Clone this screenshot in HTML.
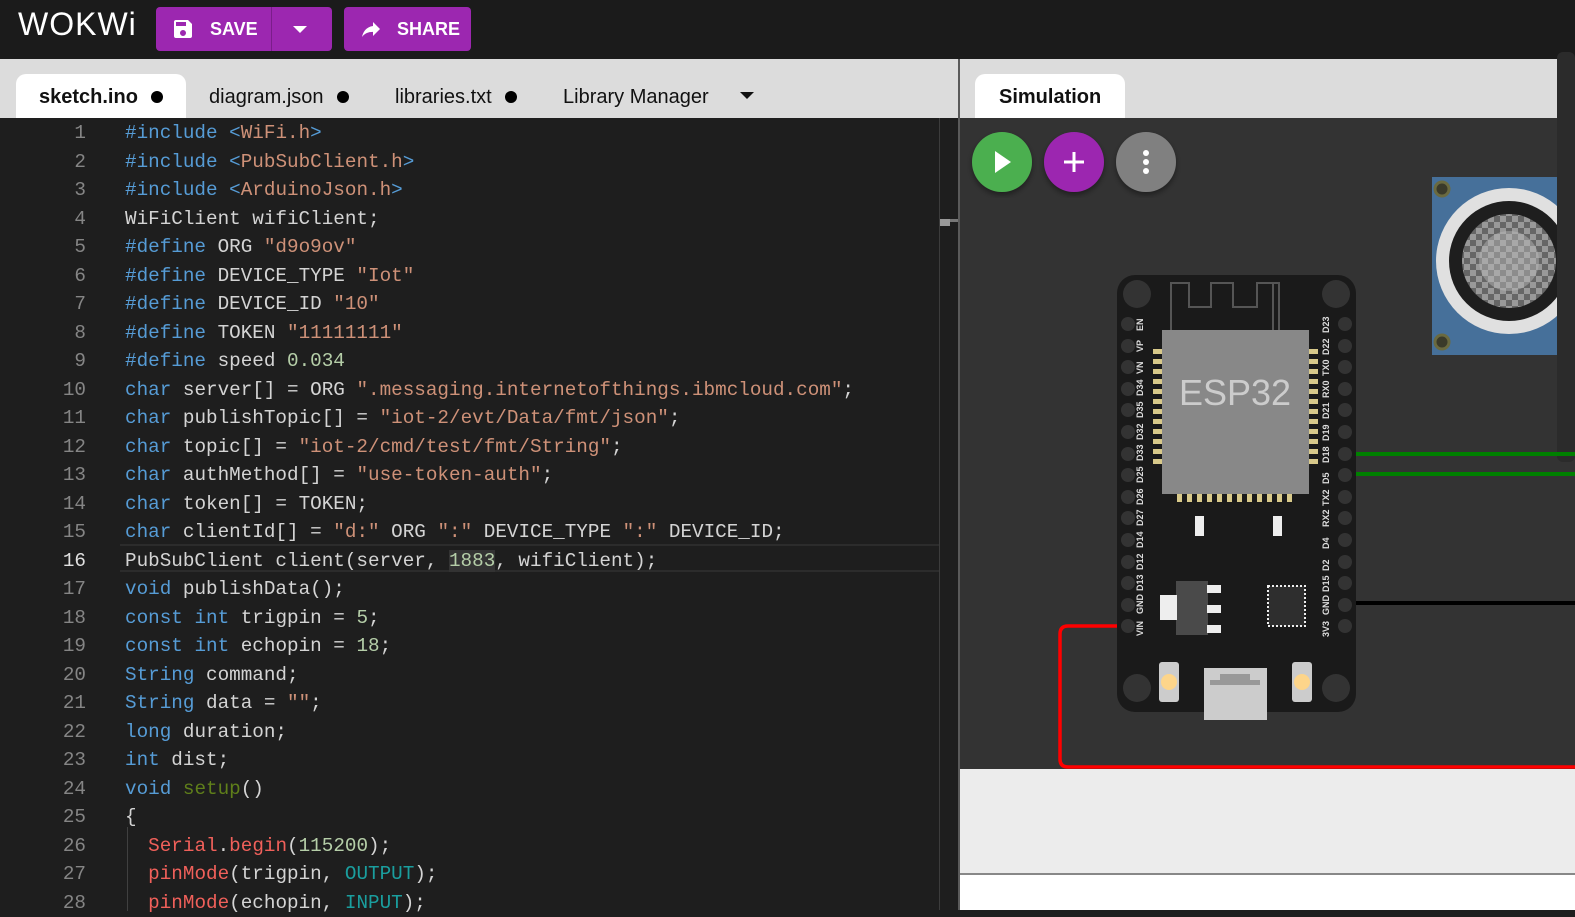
<!DOCTYPE html>
<html><head><meta charset="utf-8"><style>
*{margin:0;padding:0;box-sizing:border-box}
body{width:1575px;height:910px;overflow:hidden;background:#1e1e1e;position:relative;font-family:"Liberation Sans",sans-serif}
.top{position:absolute;left:0;top:0;width:1575px;height:59px;background:#1b1b1b}
.btn{position:absolute;top:7px;height:44px;background:#9c27b0;border-radius:4px;color:#fff;font-weight:bold;font-size:18px;line-height:44px}
.tabbar{position:absolute;top:59px;height:59px;background:#dcdcdc}
.tab{position:absolute;top:15px;height:44px;font-size:20px;line-height:46px;color:#111}
.code{position:absolute;left:0;top:119px;width:940px;font-family:"Liberation Mono",monospace;font-size:19.3px;color:#d4d4d4}
.l{height:28.52px;line-height:28.52px;white-space:pre;position:relative}
.n{display:inline-block;width:86px;text-align:right;color:#858585;margin-right:39px}
.k{color:#569cd6}.s{color:#ce9178}.d{color:#b5cea8}.f{color:#5f7f1a}.r{color:#f0605a}.t{color:#1a9e9e}
</style></head><body>
<div class="top">
  <div style="position:absolute;left:18px;top:6px;color:#fff;font-size:32px;letter-spacing:1px;font-family:'Liberation Sans',sans-serif">WOKWi</div>
  <div class="btn" style="left:156px;width:176px">
    <svg style="position:absolute;left:15px;top:10px" width="24" height="24" viewBox="0 0 24 24"><path fill="#fff" d="M17 3H5a2 2 0 0 0-2 2v14a2 2 0 0 0 2 2h14a2 2 0 0 0 2-2V7l-4-4zm-5 16a3 3 0 1 1 0-6 3 3 0 0 1 0 6zm3-10H5V5h10v4z"/></svg>
    <span style="position:absolute;left:54px">SAVE</span>
    <div style="position:absolute;left:115px;top:0;width:1px;height:44px;background:#7a1d8a"></div>
    <div style="position:absolute;left:137px;top:19px;border-left:7px solid transparent;border-right:7px solid transparent;border-top:7px solid #fff"></div>
  </div>
  <div class="btn" style="left:344px;width:127px">
    <svg style="position:absolute;left:14px;top:10px" width="26" height="24" viewBox="0 0 24 24"><path fill="#fff" d="M14 5v4C7 10 4 15 3 20c2.5-3.5 6-5.1 11-5.1V19l7-7-7-7z"/></svg>
    <span style="position:absolute;left:53px">SHARE</span>
  </div>
</div>
<div class="tabbar" style="left:0;width:958px">
  <div class="tab" style="left:16px;width:170px;background:#fff;border-radius:10px 10px 0 0;font-weight:bold;padding-left:23px">sketch.ino <span style="display:inline-block;width:12px;height:12px;border-radius:50%;background:#000;margin-left:8px"></span></div>
  <div class="tab" style="left:209px">diagram.json <span style="display:inline-block;width:12px;height:12px;border-radius:50%;background:#000;margin-left:8px"></span></div>
  <div class="tab" style="left:395px">libraries.txt <span style="display:inline-block;width:12px;height:12px;border-radius:50%;background:#000;margin-left:8px"></span></div>
  <div class="tab" style="left:563px">Library Manager</div>
  <div style="position:absolute;left:740px;top:33px;border-left:7px solid transparent;border-right:7px solid transparent;border-top:7px solid #111"></div>
</div>
<div class="tabbar" style="left:960px;width:615px">
  <div class="tab" style="left:15px;width:150px;background:#fff;border-radius:10px 10px 0 0;font-weight:bold;padding-left:24px">Simulation</div>
</div>
<div style="position:absolute;left:958px;top:59px;width:2px;height:851px;background:#5a5a5a"></div>
<div style="position:absolute;left:939px;top:118px;width:1px;height:792px;background:#3c3c3c"></div>
<div style="position:absolute;left:940px;top:219px;width:18px;height:3px;background:#777"></div>
<div style="position:absolute;left:940px;top:219px;width:10px;height:7px;background:#999"></div>
<div style="position:absolute;left:120px;top:544px;width:819px;height:28px;border-top:2px solid #2c2c2c;border-bottom:2px solid #2c2c2c"></div>
<div style="position:absolute;left:127px;top:827px;width:1px;height:84px;background:#404040"></div>
<div class="code">
<div class="l"><span class="n">1</span><span class="k">#include</span> <span class="k">&lt;</span><span class="s">WiFi.h</span><span class="k">&gt;</span></div>
<div class="l"><span class="n">2</span><span class="k">#include</span> <span class="k">&lt;</span><span class="s">PubSubClient.h</span><span class="k">&gt;</span></div>
<div class="l"><span class="n">3</span><span class="k">#include</span> <span class="k">&lt;</span><span class="s">ArduinoJson.h</span><span class="k">&gt;</span></div>
<div class="l"><span class="n">4</span>WiFiClient wifiClient;</div>
<div class="l"><span class="n">5</span><span class="k">#define</span> ORG <span class="s">"d9o9ov"</span></div>
<div class="l"><span class="n">6</span><span class="k">#define</span> DEVICE_TYPE <span class="s">"Iot"</span></div>
<div class="l"><span class="n">7</span><span class="k">#define</span> DEVICE_ID <span class="s">"10"</span></div>
<div class="l"><span class="n">8</span><span class="k">#define</span> TOKEN <span class="s">"11111111"</span></div>
<div class="l"><span class="n">9</span><span class="k">#define</span> speed <span class="d">0.034</span></div>
<div class="l"><span class="n">10</span><span class="k">char</span> server[] = ORG <span class="s">".messaging.internetofthings.ibmcloud.com"</span>;</div>
<div class="l"><span class="n">11</span><span class="k">char</span> publishTopic[] = <span class="s">"iot-2/evt/Data/fmt/json"</span>;</div>
<div class="l"><span class="n">12</span><span class="k">char</span> topic[] = <span class="s">"iot-2/cmd/test/fmt/String"</span>;</div>
<div class="l"><span class="n">13</span><span class="k">char</span> authMethod[] = <span class="s">"use-token-auth"</span>;</div>
<div class="l"><span class="n">14</span><span class="k">char</span> token[] = TOKEN;</div>
<div class="l"><span class="n">15</span><span class="k">char</span> clientId[] = <span class="s">"d:"</span> ORG <span class="s">":"</span> DEVICE_TYPE <span class="s">":"</span> DEVICE_ID;</div>
<div class="l"><span class="n" style="color:#e0e0e0">16</span>PubSubClient client(server, <span class="d" style="background:#333">1883</span>, wifiClient);</div>
<div class="l"><span class="n">17</span><span class="k">void</span> publishData();</div>
<div class="l"><span class="n">18</span><span class="k">const</span> <span class="k">int</span> trigpin = <span class="d">5</span>;</div>
<div class="l"><span class="n">19</span><span class="k">const</span> <span class="k">int</span> echopin = <span class="d">18</span>;</div>
<div class="l"><span class="n">20</span><span class="k">String</span> command;</div>
<div class="l"><span class="n">21</span><span class="k">String</span> data = <span class="s">""</span>;</div>
<div class="l"><span class="n">22</span><span class="k">long</span> duration;</div>
<div class="l"><span class="n">23</span><span class="k">int</span> dist;</div>
<div class="l"><span class="n">24</span><span class="k">void</span> <span class="f">setup</span>()</div>
<div class="l"><span class="n">25</span>{</div>
<div class="l"><span class="n">26</span>  <span class="r">Serial</span>.<span class="r">begin</span>(<span class="d">115200</span>);</div>
<div class="l"><span class="n">27</span>  <span class="r">pinMode</span>(trigpin, <span class="t">OUTPUT</span>);</div>
<div class="l"><span class="n">28</span>  <span class="r">pinMode</span>(echopin, <span class="t">INPUT</span>);</div>
</div>
<div style="position:absolute;left:960px;top:118px;width:615px;height:651px;background:#333"></div>
<div style="position:absolute;left:960px;top:769px;width:615px;height:105px;background:#ececec"></div>
<div style="position:absolute;left:960px;top:873px;width:615px;height:2px;background:#888"></div>
<div style="position:absolute;left:960px;top:875px;width:615px;height:35px;background:#fff"></div>
<svg style="position:absolute;left:0;top:0" width="1575" height="910" viewBox="0 0 1575 910">
  <defs>
    <pattern id="chk" width="12" height="12" patternUnits="userSpaceOnUse"><rect width="12" height="12" fill="#666"/><rect width="6" height="6" fill="#999"/><rect x="6" y="6" width="6" height="6" fill="#999"/></pattern>
    <filter id="sh"><feDropShadow dx="0" dy="3" stdDeviation="3" flood-opacity="0.4"/></filter>
  </defs>
  <g filter="url(#sh)">
  <circle cx="1002" cy="162" r="30" fill="#4caf50"/>
  <circle cx="1074" cy="162" r="30" fill="#9c27b0"/>
  <circle cx="1146" cy="162" r="30" fill="#808080"/>
  </g>
  <path d="M995 151v22l16-11z" fill="#fff"/>
  <path d="M1074 152v20M1064 162h20" stroke="#fff" stroke-width="3"/>
  <circle cx="1146" cy="153" r="3" fill="#fff"/><circle cx="1146" cy="162" r="3" fill="#fff"/><circle cx="1146" cy="171" r="3" fill="#fff"/>
  <rect x="1432" y="177" width="130" height="178" fill="#46709a"/>
  <circle cx="1442" cy="189" r="7" fill="#3a3a2a" stroke="#6a6a40" stroke-width="3"/>
  <circle cx="1442" cy="342" r="7" fill="#3a3a2a" stroke="#6a6a40" stroke-width="3"/>
  <circle cx="1509" cy="261" r="73" fill="#e0e0e0"/>
  <circle cx="1509" cy="261" r="60" fill="#1e1e1e"/>
  <circle cx="1509" cy="261" r="47" fill="url(#chk)"/>
  <circle cx="1509" cy="261" r="30" fill="#bbb" opacity="0.45"/>
  <rect x="1557" y="52" width="18" height="410" rx="6" fill="#2b2b2b"/>
  <path d="M1345 454H1575M1345 474H1575" stroke="#008000" stroke-width="4"/>
  <path d="M1345 603H1575" stroke="#000" stroke-width="4"/>
  <path d="M1128 626H1068q-8 0-8 8V759q0 8 8 8H1575" stroke="#f00" stroke-width="3.5" fill="none"/>
  <rect x="1117" y="275" width="239" height="437" rx="18" fill="#1a1a1a"/>
  <circle cx="1137" cy="294" r="14" fill="#333"/><circle cx="1336" cy="294" r="14" fill="#333"/>
  <circle cx="1137" cy="688" r="14" fill="#333"/><circle cx="1336" cy="688" r="14" fill="#333"/>
  <path d="M1171 330V283h18v24h22v-24h22v24h24v-24h22v47M1273 283v47" stroke="#555" stroke-width="2" fill="none"/>
  <g fill="#333">
  <circle cx="1128" cy="324" r="7"/><circle cx="1128" cy="346" r="7"/><circle cx="1128" cy="367" r="7"/><circle cx="1128" cy="389" r="7"/><circle cx="1128" cy="410" r="7"/><circle cx="1128" cy="432" r="7"/><circle cx="1128" cy="454" r="7"/><circle cx="1128" cy="475" r="7"/><circle cx="1128" cy="497" r="7"/><circle cx="1128" cy="518" r="7"/><circle cx="1128" cy="540" r="7"/><circle cx="1128" cy="562" r="7"/><circle cx="1128" cy="583" r="7"/><circle cx="1128" cy="605" r="7"/><circle cx="1128" cy="626" r="7"/>
  <circle cx="1345" cy="324" r="7"/><circle cx="1345" cy="346" r="7"/><circle cx="1345" cy="367" r="7"/><circle cx="1345" cy="389" r="7"/><circle cx="1345" cy="410" r="7"/><circle cx="1345" cy="432" r="7"/><circle cx="1345" cy="454" r="7"/><circle cx="1345" cy="475" r="7"/><circle cx="1345" cy="497" r="7"/><circle cx="1345" cy="518" r="7"/><circle cx="1345" cy="540" r="7"/><circle cx="1345" cy="562" r="7"/><circle cx="1345" cy="583" r="7"/><circle cx="1345" cy="605" r="7"/><circle cx="1345" cy="626" r="7"/>
  </g>
  <g fill="#d8c98a">
  <rect x="1153" y="349" width="9" height="5"/><rect x="1153" y="359" width="9" height="5"/><rect x="1153" y="369" width="9" height="5"/><rect x="1153" y="379" width="9" height="5"/><rect x="1153" y="389" width="9" height="5"/><rect x="1153" y="399" width="9" height="5"/><rect x="1153" y="409" width="9" height="5"/><rect x="1153" y="419" width="9" height="5"/><rect x="1153" y="429" width="9" height="5"/><rect x="1153" y="439" width="9" height="5"/><rect x="1153" y="449" width="9" height="5"/><rect x="1153" y="459" width="9" height="5"/>
  <rect x="1309" y="349" width="9" height="5"/><rect x="1309" y="359" width="9" height="5"/><rect x="1309" y="369" width="9" height="5"/><rect x="1309" y="379" width="9" height="5"/><rect x="1309" y="389" width="9" height="5"/><rect x="1309" y="399" width="9" height="5"/><rect x="1309" y="409" width="9" height="5"/><rect x="1309" y="419" width="9" height="5"/><rect x="1309" y="429" width="9" height="5"/><rect x="1309" y="439" width="9" height="5"/><rect x="1309" y="449" width="9" height="5"/><rect x="1309" y="459" width="9" height="5"/>
  <rect x="1177" y="493" width="5" height="9"/><rect x="1187" y="493" width="5" height="9"/><rect x="1197" y="493" width="5" height="9"/><rect x="1207" y="493" width="5" height="9"/><rect x="1217" y="493" width="5" height="9"/><rect x="1227" y="493" width="5" height="9"/><rect x="1237" y="493" width="5" height="9"/><rect x="1247" y="493" width="5" height="9"/><rect x="1257" y="493" width="5" height="9"/><rect x="1267" y="493" width="5" height="9"/><rect x="1277" y="493" width="5" height="9"/><rect x="1287" y="493" width="5" height="9"/>
  </g>
  <rect x="1162" y="330" width="147" height="164" fill="#888"/>
  <text x="1235" y="405" font-family="Liberation Sans,sans-serif" font-size="36" fill="#ccc" text-anchor="middle">ESP32</text>
  <rect x="1195" y="516" width="9" height="20" fill="#eee"/><rect x="1273" y="516" width="9" height="20" fill="#eee"/>
  <rect x="1176" y="581" width="32" height="54" fill="#4a4a4a"/><rect x="1160" y="595" width="17" height="25" fill="#eee"/>
  <rect x="1207" y="585" width="14" height="8" fill="#eee"/><rect x="1207" y="605" width="14" height="8" fill="#eee"/><rect x="1207" y="625" width="14" height="8" fill="#eee"/>
  <rect x="1268" y="586" width="37" height="40" fill="#2e2e2e" stroke="#eee" stroke-width="2" stroke-dasharray="2 2"/>
  <rect x="1159" y="662" width="20" height="40" rx="3" fill="#ccc"/><circle cx="1169" cy="682" r="8" fill="#fdd58a"/>
  <rect x="1292" y="662" width="20" height="40" rx="3" fill="#ccc"/><circle cx="1302" cy="682" r="8" fill="#fdd58a"/>
  <rect x="1204" y="668" width="63" height="52" fill="#ccc"/><path d="M1210 680h10v-6h30v6h10v5h-50z" fill="#999"/>
  <g font-family="Liberation Sans,sans-serif" font-size="9" font-weight="bold" fill="#ddd">
  <text transform="translate(1143 331) rotate(-90)">EN</text><text transform="translate(1143 352) rotate(-90)">VP</text><text transform="translate(1143 374) rotate(-90)">VN</text><text transform="translate(1143 396) rotate(-90)">D34</text><text transform="translate(1143 418) rotate(-90)">D35</text><text transform="translate(1143 440) rotate(-90)">D32</text><text transform="translate(1143 461) rotate(-90)">D33</text><text transform="translate(1143 483) rotate(-90)">D25</text><text transform="translate(1143 505) rotate(-90)">D26</text><text transform="translate(1143 526) rotate(-90)">D27</text><text transform="translate(1143 548) rotate(-90)">D14</text><text transform="translate(1143 570) rotate(-90)">D12</text><text transform="translate(1143 591) rotate(-90)">D13</text><text transform="translate(1143 614) rotate(-90)">GND</text><text transform="translate(1143 636) rotate(-90)">VIN</text>
  <text transform="translate(1329 333) rotate(-90)">D23</text><text transform="translate(1329 355) rotate(-90)">D22</text><text transform="translate(1329 376) rotate(-90)">TX0</text><text transform="translate(1329 398) rotate(-90)">RX0</text><text transform="translate(1329 419) rotate(-90)">D21</text><text transform="translate(1329 441) rotate(-90)">D19</text><text transform="translate(1329 463) rotate(-90)">D18</text><text transform="translate(1329 484) rotate(-90)">D5</text><text transform="translate(1329 506) rotate(-90)">TX2</text><text transform="translate(1329 527) rotate(-90)">RX2</text><text transform="translate(1329 549) rotate(-90)">D4</text><text transform="translate(1329 571) rotate(-90)">D2</text><text transform="translate(1329 592) rotate(-90)">D15</text><text transform="translate(1329 615) rotate(-90)">GND</text><text transform="translate(1329 637) rotate(-90)">3V3</text>
  </g>
</svg>
</body></html>
